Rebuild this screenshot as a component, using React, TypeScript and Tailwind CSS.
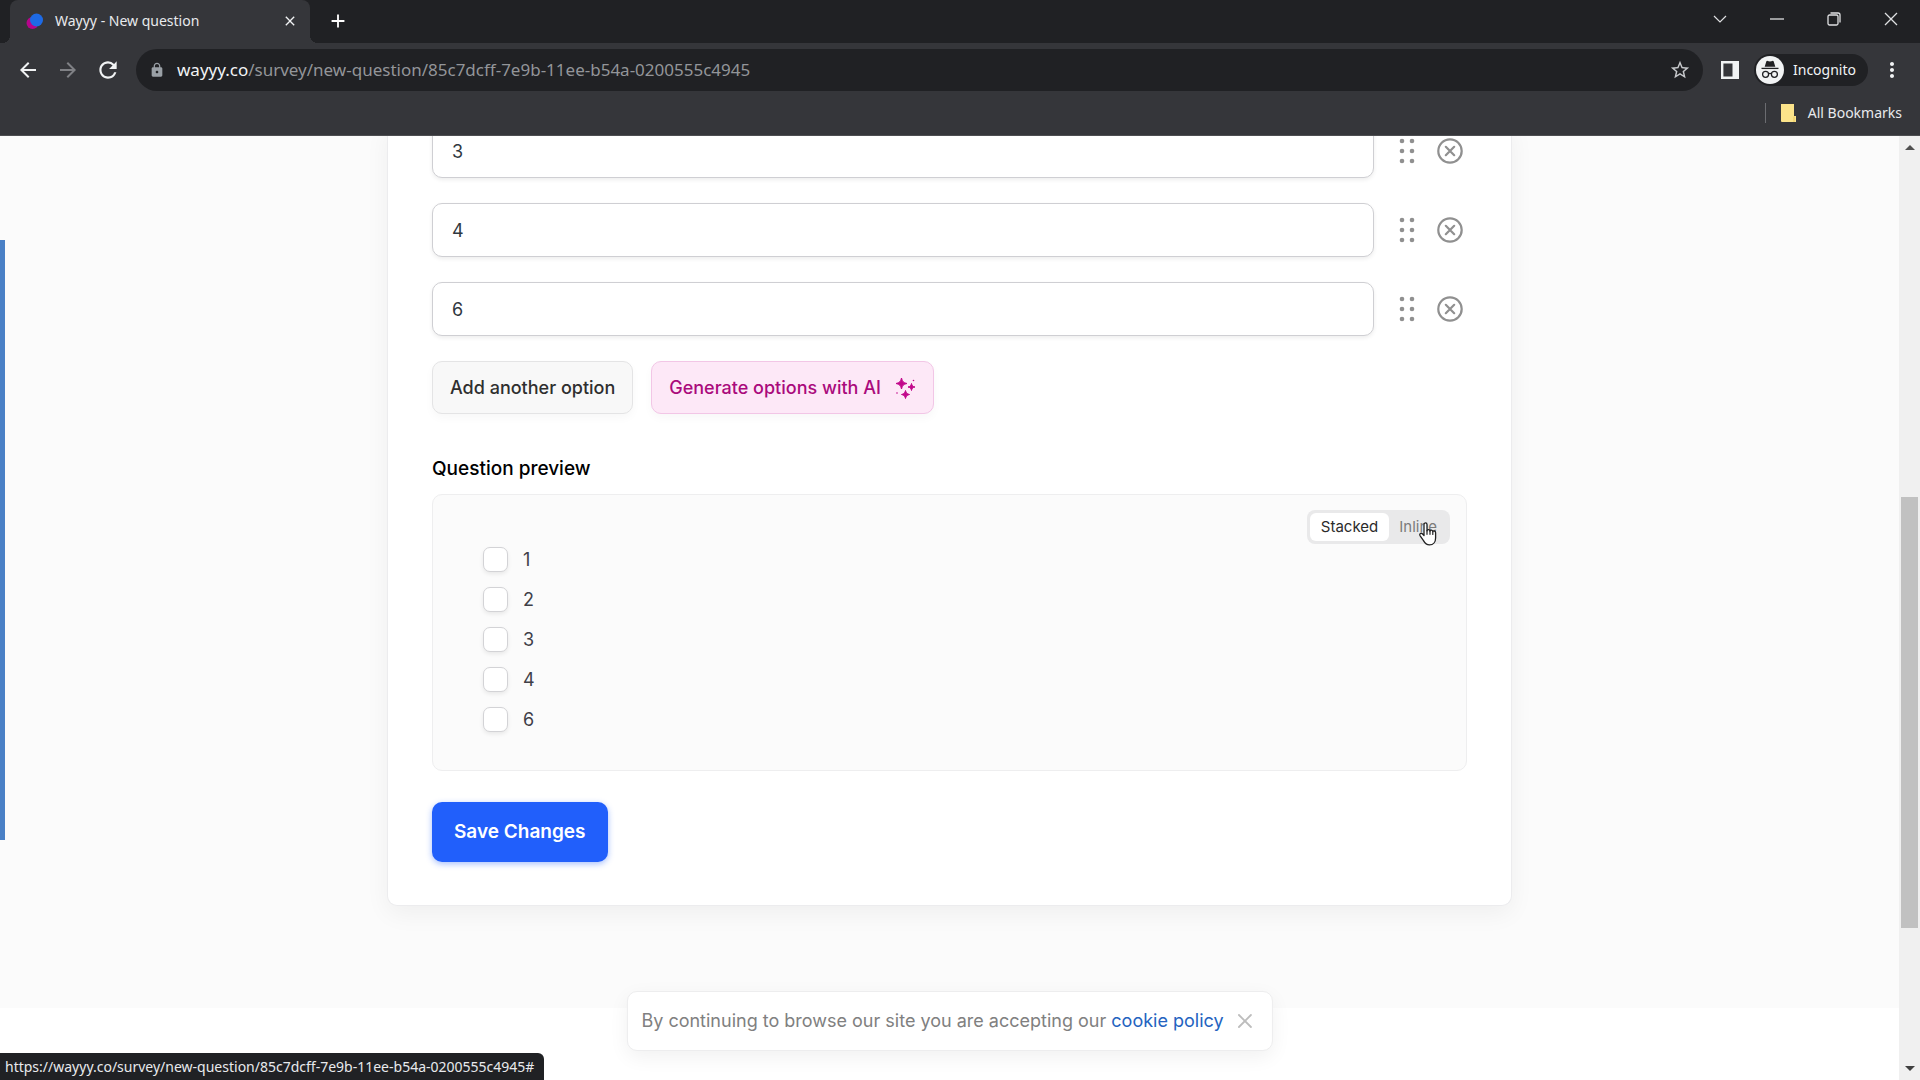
import React, { useState } from "react";
import {
  MdArrowBack,
  MdArrowForward,
  MdRefresh,
  MdLock,
  MdStarBorder,
  MdMoreVert,
  MdClose,
  MdAdd,
} from "react-icons/md";

function Favicon() {
  return (
    <svg className="size-5 shrink-0" viewBox="0 0 20 20" aria-hidden="true">
      <circle cx="6.500" cy="12" r="6" fill="#b5048b" />
      <circle cx="10.500" cy="9" r="6.500" fill="#1d6ae5" />
    </svg>
  );
}

function TabStrip() {
  return (
    <header className="flex h-[43px] bg-[#202124] pl-[10px]">
      <div className="relative flex w-[300px] items-center rounded-t-lg bg-[#35363a] pr-[10px] pb-[2px] pl-4 before:absolute before:bottom-0 before:-left-2 before:size-2 before:bg-[radial-gradient(circle_at_0_0,transparent_8px,#35363a_8px)] after:absolute after:-right-2 after:bottom-0 after:size-2 after:bg-[radial-gradient(circle_at_100%_0,transparent_8px,#35363a_8px)]">
        <Favicon />
        <span className="ml-[9px] flex-1 text-[14px] leading-5 whitespace-nowrap text-[#e8eaed]">Wayyy - New question</span>
        <button aria-label="Close tab" className="flex size-5 items-center justify-center text-[#f1f3f4]">
          <MdClose className="size-4" />
        </button>
      </div>
      <button aria-label="New tab" className="ml-4 flex w-6 items-center justify-center pb-px text-white">
        <MdAdd className="size-[22px]" />
      </button>
      <div className="ml-auto flex items-center pr-px pb-[6px] text-[#dfe0e2]">
        <button aria-label="Search tabs" className="flex h-9 w-[57px] items-center justify-center">
          <svg className="h-2 w-[14px]" viewBox="0 0 14 8" fill="none" stroke="currentColor" strokeWidth="1.2">
            <path d="M1 1l6 6 6-6" />
          </svg>
        </button>
        <button aria-label="Minimize" className="flex h-9 w-[57px] items-center justify-center">
          <svg className="h-[2px] w-[14px]" viewBox="0 0 14 2" stroke="currentColor" strokeWidth="1.3">
            <path d="M0 1h14" />
          </svg>
        </button>
        <button aria-label="Restore" className="flex h-9 w-[57px] items-center justify-center">
          <svg className="size-[14px]" viewBox="0 0 14 14" fill="none" stroke="currentColor" strokeWidth="1.3">
            <rect x="1" y="3" width="10" height="10" rx="1.5" />
            <path d="M3.5 1H11a2 2 0 0 1 2 2v7.5" />
          </svg>
        </button>
        <button aria-label="Close window" className="flex h-9 w-[57px] items-center justify-center">
          <svg className="size-[14px]" viewBox="0 0 14 14" stroke="currentColor" strokeWidth="1.3">
            <path d="M1 1l12 12M13 1L1 13" />
          </svg>
        </button>
      </div>
    </header>
  );
}

function IncognitoIcon() {
  return (
    <svg className="size-7 shrink-0" viewBox="0 0 28 28" aria-hidden="true">
      <circle cx="14" cy="14" r="14" fill="#f1f3f4" />
      <path d="M10.3 5.5c.2-.6.8-.8 1.3-.6l2.4.7 2.4-.7c.5-.2 1.1 0 1.3.6l1.600 5.3H8.700z" fill="#202124" />
      <path d="M5.500 12.400h17" stroke="#202124" strokeWidth="1.300" />
      <g fill="none" stroke="#202124" strokeWidth="1.300">
        <circle cx="9.600" cy="18.300" r="3" />
        <circle cx="18.400" cy="18.300" r="3" />
        <path d="M12.600 17.800c.9-.6 1.900-.6 2.800 0" />
      </g>
    </svg>
  );
}

function Toolbar() {
  return (
    <div className="flex h-[53px] items-center bg-[#35363a] pr-4 pl-4">
      <button aria-label="Back" className="flex w-6 justify-center text-[#f1f3f4]">
        <MdArrowBack className="size-6" />
      </button>
      <button aria-label="Forward" className="ml-4 flex w-6 justify-center text-[#808185]">
        <MdArrowForward className="size-6" />
      </button>
      <button aria-label="Reload" className="ml-4 flex w-6 justify-center text-[#f1f3f4]">
        <MdRefresh className="size-[26px] shrink-0" />
      </button>
      <div className="ml-4 flex h-[42px] flex-1 items-center rounded-full bg-[#202124] pr-3 pl-[13px]">
        <MdLock className="size-4 text-[#9aa0a6]" />
        <p className="ml-3 flex-1 text-[17px] leading-6 whitespace-nowrap text-[#939599]">
          <span className="text-[#f1f3f4]">wayyy.co</span>/survey/new-question/85c7dcff-7e9b-11ee-b54a-0200555c4945
        </p>
        <button aria-label="Bookmark this page" className="text-[#c7c9cc]">
          <MdStarBorder className="size-[22px]" />
        </button>
      </div>
      <button aria-label="Side panel" className="ml-[18px] text-[#f1f3f4]">
        <svg className="size-[18px]" viewBox="0 0 18 18" fill="none" stroke="currentColor">
          <path d="M1.200 1.200h15.600v15.600H1.200z" strokeWidth="2.400" />
          <path d="M14.500 1v16" strokeWidth="6" />
        </svg>
      </button>
      <button className="ml-[15px] flex h-8 items-center rounded-full bg-[#202124] pr-3 pl-[2px] text-[#f1f3f4]">
        <IncognitoIcon />
        <span className="ml-[9px] text-[14px] leading-5">Incognito</span>
      </button>
      <button aria-label="Menu" className="ml-3 text-[#f1f3f4]">
        <MdMoreVert className="size-6" />
      </button>
    </div>
  );
}

function BookmarksBar() {
  return (
    <div className="flex h-10 items-center justify-end border-b border-[#4d4e51] bg-[#35363a] pr-[18px] pb-[6px]">
      <span className="h-5 w-px bg-[#6b6c70]" />
      <button className="ml-[14px] flex items-center text-[#e8eaed]">
        <svg className="h-[18px] w-4" viewBox="0 0 16 18" aria-hidden="true">
          <path d="M1 0h13v12h2v6H2a1 1 0 0 1-1-1z" fill="#fbe38a" />
          <path d="M14 12.500v5.500" stroke="#e9c85c" />
        </svg>
        <span className="ml-3 text-[14px] leading-5">All Bookmarks</span>
      </button>
    </div>
  );
}

function DragDots() {
  return (
    <svg className="h-[26px] w-4" viewBox="0 0 16 26" fill="#909090" aria-hidden="true">
      {[3, 13, 23].map((y) => (
        <g key={y}>
          <circle cx="3" cy={y} r="2.300" />
          <circle cx="13" cy={y} r="2.300" />
        </g>
      ))}
    </svg>
  );
}

function OptionRow({ value }: { value: string }) {
  const [text, setText] = useState(value);
  return (
    <li className="flex items-center pr-1">
      <input
        aria-label={"Option " + value}
        value={text}
        onChange={(e) => setText(e.target.value)}
        className="h-[54px] min-w-0 flex-1 rounded-[10px] border border-[#cfcfd3] bg-white px-[19px] text-[18px] leading-6 text-[#303840] shadow-[0_2px_4px_rgba(0,0,0,0.07)] outline-none"
      />
      <button type="button" aria-label="Reorder option" className="ml-[25px]">
        <DragDots />
      </button>
      <button type="button" aria-label="Remove option" className="ml-[22px]">
        <svg className="size-[26px]" viewBox="0 0 26 26" fill="none" stroke="#909090" strokeWidth="2.200" strokeLinecap="round">
          <circle cx="13" cy="13" r="11.700" />
          <path d="M8.800 8.800l8.400 8.400M17.200 8.800l-8.400 8.400" />
        </svg>
      </button>
    </li>
  );
}

function Sparkles() {
  return (
    <svg className="size-[22px]" viewBox="0 0 22 22" fill="#c2078b" aria-hidden="true">
      <path d="M7.500 1c.8 3.600 2 4.800 5.500 5.500-3.500.7-4.700 1.900-5.500 5.500C6.700 8.400 5.500 7.200 2 6.500 5.500 5.800 6.700 4.600 7.500 1z" stroke="#c2078b" strokeLinejoin="round" />
      <path d="M17.500 6.500c.5 2.300 1.200 3 3.500 3.500-2.300.5-3 1.200-3.500 3.500-.5-2.300-1.200-3-3.500-3.500 2.300-.5 3-1.200 3.500-3.500z" stroke="#c2078b" strokeLinejoin="round" />
      <path d="M11.500 13.500c.6 2.500 1.500 3.400 4 4-2.500.6-3.400 1.500-4 4-.6-2.500-1.500-3.400-4-4 2.500-.6 3.400-1.500 4-4z" stroke="#c2078b" strokeLinejoin="round" />
      <circle cx="19.500" cy="3.500" r=".8" />
      <circle cx="3" cy="16" r=".8" />
    </svg>
  );
}

function HandCursor() {
  return (
    <svg className="pointer-events-none absolute top-3 left-[111px] h-6 w-[19px]" viewBox="0 0 19 24" aria-hidden="true">
      <path
        d="M6 2.600C6 .4 9 .4 9 2.600v6.200c.2-1.600 2.900-1.500 3 .3.300-1.400 2.700-1.200 2.800.6.400-1.200 2.800-1 2.800 1v5.200c0 4-2.200 7-6.100 7-3.400 0-4.600-1.700-6-4.300L2 13.600c-.9-1.700 1-3.100 2.300-1.900L6 13.500z"
        fill="#fff"
        stroke="#222"
        strokeWidth="1.300"
        strokeLinejoin="round"
      />
      <path d="M9 8.500v3.800M12 9v3.300M14.800 10v2.500" stroke="#222" strokeWidth="1.200" strokeLinecap="round" />
    </svg>
  );
}

function QuestionPreview() {
  return (
    <section className="rounded-[10px] border border-[#eeeeef] bg-[#fbfbfb] pt-[15px] pr-4 pb-[38px] pl-[50px]">
      <div className="flex flex-row-reverse items-start justify-between">
        <div className="relative flex rounded-lg bg-[#e9e9ea] p-[3px] text-[15px] leading-[22px]">
          <button type="button" className="rounded-md bg-white px-[11px] py-[3px] text-[#2b2b2b]">Stacked</button>
          <button type="button" className="px-[10px] py-[3px] text-[#7b7b7b]">Inline</button>
          <HandCursor />
        </div>
        <ul className="mt-[37px] space-y-[15px]">
          {["1", "2", "3", "4", "6"].map((n) => (
            <li key={n}>
              <label className="flex h-[25px] items-center gap-[15px] text-[18px] leading-6 text-[#404048]">
                <input
                  type="checkbox"
                  className="size-[25px] appearance-none rounded-[7px] border border-[#d3d3d6] bg-white shadow-[0_2px_4px_rgba(0,0,0,0.08)] checked:bg-[#215ffb]"
                />
                {n}
              </label>
            </li>
          ))}
        </ul>
      </div>
    </section>
  );
}

function QuestionCard() {
  return (
    <form
      onSubmit={(e) => e.preventDefault()}
      className="mx-auto -mt-3 w-full max-w-[1125px] rounded-b-[10px] border-x border-b border-[#ececee] bg-white px-[44px] pb-[43px] shadow-[0_8px_24px_rgba(0,0,0,0.05)]"
    >
      <ul className="space-y-[25px]">
        {["3", "4", "6"].map((v) => (
          <OptionRow key={v} value={v} />
        ))}
      </ul>
      <div className="mt-[25px] flex gap-[18px] text-[18px] leading-6 font-medium">
        <button
          type="button"
          className="h-[53px] rounded-[10px] border border-[#e4e4e5] bg-[#f8f8f8] px-[17px] text-[#2f2f2f] shadow-[0_4px_10px_rgba(0,0,0,0.03)]"
        >
          Add another option
        </button>
        <button
          type="button"
          className="flex h-[53px] items-center gap-[13px] rounded-[10px] border border-[#f2c6e6] bg-[#fde8f7] px-[17px] text-[#aa0a7c] shadow-[0_4px_10px_rgba(0,0,0,0.03)]"
        >
          Generate options with AI
          <Sparkles />
        </button>
      </div>
      <h2 className="mt-[43px] mb-[13px] text-[19px] leading-6 font-medium text-black">Question preview</h2>
      <QuestionPreview />
      <button
        type="submit"
        className="mt-[31px] block h-[60px] rounded-[10px] bg-[#215ffb] px-[22px] text-[19px] leading-6 font-semibold text-white shadow-[0_2px_6px_rgba(33,95,251,0.4)]"
      >
        Save Changes
      </button>
    </form>
  );
}

function CookieNotice() {
  return (
    <div className="absolute bottom-[29px] left-1/2 flex h-[60px] -translate-x-1/2 items-center rounded-[10px] border border-[#ededee] bg-white pr-5 pl-[14px] shadow-[0_6px_20px_rgba(0,0,0,0.06)]">
      <p className="text-[18px] leading-6 whitespace-nowrap text-[#808080]">
        By continuing to browse our site you are accepting our{" "}
        <a href="#cookies" className="text-[#2463c0]">
          cookie policy
        </a>
      </p>
      <button aria-label="Dismiss" className="ml-[14px]">
        <svg className="size-[14px]" viewBox="0 0 14 14" stroke="#bdbdbd" strokeWidth="1.800" strokeLinecap="round">
          <path d="M1 1l12 12M13 1L1 13" />
        </svg>
      </button>
    </div>
  );
}

function ScrollTrack() {
  return (
    <div className="flex w-[21px] flex-col items-center justify-between bg-[#f0f0f0] py-[9px]" aria-hidden="true">
      <svg className="h-[5px] w-[10px]" viewBox="0 0 10 5" fill="#505050">
        <path d="M0 5l5-5 5 5z" />
      </svg>
      <div className="mt-[347px] mb-auto h-[431px] w-[17px] bg-[#c1c1c1]" />
      <svg className="h-[5px] w-[10px]" viewBox="0 0 10 5" fill="#404040">
        <path d="M0 0l5 5 5-5z" />
      </svg>
    </div>
  );
}

export default function App() {
  return (
    <div className="flex h-screen flex-col overflow-hidden bg-white font-['Inter',sans-serif]">
      <div className="font-['Noto_Sans',sans-serif]">
        <TabStrip />
        <Toolbar />
        <BookmarksBar />
      </div>
      <div className="flex min-h-0 flex-1">
        <main className="relative min-w-0 flex-1 overflow-hidden bg-white">
          <div className="bg-[#fbfbfb] pb-[102px]">
            <QuestionCard />
          </div>
          <div className="absolute top-[104px] left-0 h-[600px] w-[5px] bg-[#4a80c6]" />
          <CookieNotice />
          <div className="absolute bottom-0 left-0 rounded-tr-md bg-[#202124] pt-1 pr-[10px] pb-[3px] pl-[5px] font-['Noto_Sans',sans-serif] text-[14px] leading-5 whitespace-nowrap text-[#e8eaed]">
            https://wayyy.co/survey/new-question/85c7dcff-7e9b-11ee-b54a-0200555c4945#
          </div>
        </main>
        <ScrollTrack />
      </div>
    </div>
  );
}
